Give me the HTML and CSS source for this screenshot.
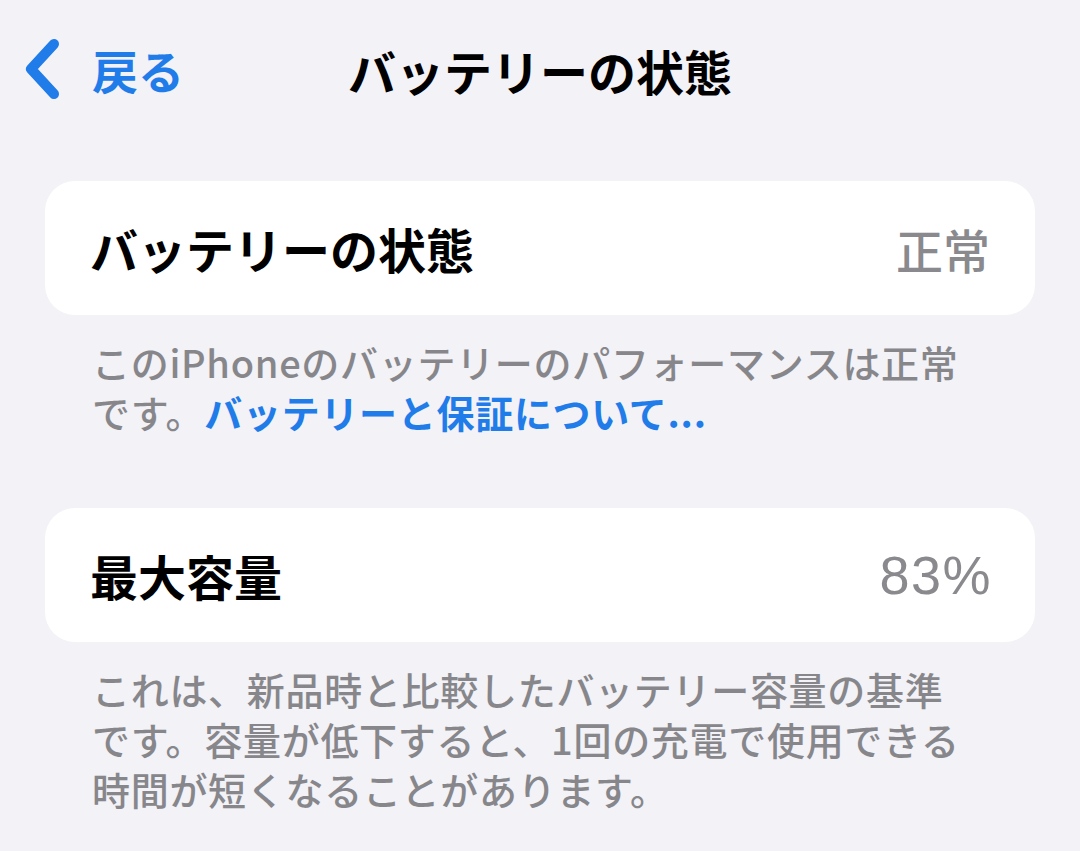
FILE: index.html
```html
<!DOCTYPE html>
<html>
<head>
  <meta charset="utf-8">
  <title>バッテリーの状態</title>
  <link rel="stylesheet" href="styles.css">
</head>
<body>

  <!-- Navigation bar -->
  <header class="nav">
    <a class="back" href="#">
      <svg class="chev" width="40" height="62" viewBox="0 0 40 62">
        <path d="M32 6 L9 31 L32 56" fill="none" stroke="currentColor" stroke-width="10" stroke-linecap="round" stroke-linejoin="round"/>
      </svg>
      <span>戻る</span>
    </a>
    <h1 class="nav-title">バッテリーの状態</h1>
    <div></div>
  </header>

  <!-- Battery health -->
  <section class="group">
    <div class="card">
      <span class="label">バッテリーの状態</span>
      <span class="value">正常</span>
    </div>
    <p class="footer">このiPhoneのバッテリーのパフォーマンスは正常<br>です。<a href="#">バッテリーと保証について...</a></p>
  </section>

  <!-- Max capacity -->
  <section class="group">
    <div class="card">
      <span class="label">最大容量</span>
      <span class="value num">83%</span>
    </div>
    <p class="footer">これは、新品時と比較したバッテリー容量の基準<br>です。容量が低下すると、1回の充電で使用できる<br>時間が短くなることがあります。</p>
  </section>

</body>
</html>
```

FILE: styles.css
```css
html, body  { margin: 0; background: #f2f2f7; }
body        { font-family: "Noto Sans CJK JP", "Noto Sans", sans-serif; color: #000; width: 1080px; height: 851px; overflow: hidden; }

/* nav bar */
.nav        { display: grid; grid-template-columns: 1fr auto 1fr; align-items: center; height: 140px; padding: 0 0 0 22px; box-sizing: border-box; }
.back       { display: flex; align-items: center; gap: 30px; color: #1f7ce8; text-decoration: none; font-size: 46px; font-weight: 700; margin-top: -2px; }
.chev       { display: block; }
.nav-title  { margin: 0; font-size: 48px; font-weight: 700; margin-left: -22px; }

/* grouped rows */
.group      { padding: 0 45px; margin-top: 41px; }
.group + .group { margin-top: 71px; }
.card       { display: flex; justify-content: space-between; align-items: center; height: 134px; background: #fff; border-radius: 30px; padding: 0 45px; }
.label      { font-size: 48px; font-weight: 700; }
.value      { font-size: 47px; font-weight: 500; color: #8a8a8e; }
.value.num  { font-family: "Liberation Sans", "Noto Sans", sans-serif; font-size: 54px; font-weight: 400; letter-spacing: 1.5px; margin-right: -2px; }

.footer     { margin: 22px 0 0; padding: 0 47px; font-size: 38px; line-height: 50px; font-weight: 500; color: #87878b; letter-spacing: 0.7px; white-space: nowrap; }
.footer a   { color: #1f7ce8; text-decoration: none; font-weight: 700; }
```
